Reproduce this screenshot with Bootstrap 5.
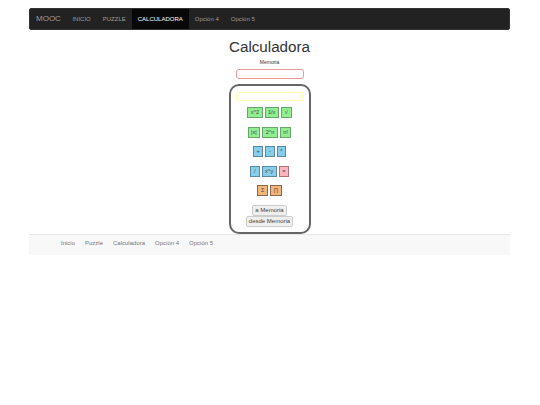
<!DOCTYPE html>
<html lang="es">
<head>
<meta charset="utf-8">
<title>MOOC</title>
<link href="https://cdn.jsdelivr.net/npm/bootstrap@5.3.0/dist/css/bootstrap.min.css" rel="stylesheet">
<style>
body { font-family: "Liberation Sans", Arial, sans-serif; color: #333; background: #fff; }
.page-wrap { width: 481px; margin: 8px 0 0 29px; }
.top-bar { height: 22px; background: #222; border: 1px solid #333; border-radius: 2px; padding: 0; font-size: 6px; }
.top-brand { color: #9d9d9d; font-size: 8px; padding: 0 5.5px 0 6px; line-height: 20px; }
.top-link { color: #9d9d9d; padding: 0 6px; line-height: 20px; text-decoration: none; }
.top-link.is-active { color: #fff; background: #080808; }
.calc-title { font-size: 15.2px; font-weight: 400; line-height: 18px; margin: 8px 0 0; text-align: center; color: #333; }
.mem-label { font-size: 5px; line-height: 6px; margin: 3px 0 4px; text-align: center; }
.mem-input { display: block; width: 68px; height: 10px; margin: 0 auto; border: 1px solid #e99; border-radius: 3px; background: #fff; padding: 0; }
.calc-box { width: 82px; height: 150px; margin: 5px auto 0; border: 2px solid #666; border-radius: 10px; padding-top: 6px; }
.disp-input { display: block; width: 67px; height: 9px; margin: 0 auto 6px; border: 1px solid #ffffa8; border-radius: 2px; background: #fff; padding: 0; }
.key-row { height: 12px; margin-bottom: 7.5px; gap: 2px; }
.calc-key { font-size: 5.5px; line-height: 9px; height: 11px; padding: 0 2.5px; border: 1px solid #666; border-radius: 0; color: #444; }
.key-green { background: #90ee90; border-color: #6aa56a; min-width: 11px; }
.key-blue { background: #87ceeb; border-color: #5a8aa2; min-width: 9.5px; }
.key-red { background: #ffb6c1; border-color: #a87278; }
.key-orange { background: #f4b67a; border-color: #86694a; min-width: 11px; }
.mem-btn { display: block; margin: 0 auto; font-size: 6px; line-height: 8px; height: 11px; padding: 0 2px; background: #efefef; border: 1px solid #ccc; border-radius: 2px; color: #444; }
.bottom-bar { height: 21px; background: #f8f8f8; border-top: 1px solid #e7e7e7; font-size: 6px; padding-left: 27px; }
.bottom-link { color: #777; padding: 0 5px; line-height: 17px; text-decoration: none; }
</style>
</head>
<body>
<div class="page-wrap">
  <nav class="top-bar d-flex align-items-stretch">
    <span class="top-brand">MOOC</span>
    <a class="top-link" href="#">INICIO</a>
    <a class="top-link" href="#">PUZZLE</a>
    <a class="top-link is-active" href="#">CALCULADORA</a>
    <a class="top-link" href="#">Opción 4</a>
    <a class="top-link" href="#">Opción 5</a>
  </nav>
  <h1 class="calc-title">Calculadora</h1>
  <p class="mem-label">Memoria</p>
  <input class="mem-input" type="text" aria-label="Memoria">
  <div class="calc-box">
    <input class="disp-input" type="text" aria-label="Pantalla">
    <div class="key-row d-flex justify-content-center">
      <button class="calc-key key-green">x^2</button><button class="calc-key key-green">1/x</button><button class="calc-key key-green">√</button>
    </div>
    <div class="key-row d-flex justify-content-center">
      <button class="calc-key key-green">|x|</button><button class="calc-key key-green">2^n</button><button class="calc-key key-green">n!</button>
    </div>
    <div class="key-row d-flex justify-content-center">
      <button class="calc-key key-blue">+</button><button class="calc-key key-blue">-</button><button class="calc-key key-blue">*</button>
    </div>
    <div class="key-row d-flex justify-content-center">
      <button class="calc-key key-blue">/</button><button class="calc-key key-blue">x^y</button><button class="calc-key key-red">=</button>
    </div>
    <div class="key-row d-flex justify-content-center">
      <button class="calc-key key-orange">Σ</button><button class="calc-key key-orange">∏</button>
    </div>
    <button class="mem-btn">a Memoria</button>
    <button class="mem-btn">desde Memoria</button>
  </div>
  <footer class="bottom-bar d-flex align-items-start">
    <a class="bottom-link" href="#">Inicio</a>
    <a class="bottom-link" href="#">Puzzle</a>
    <a class="bottom-link" href="#">Calculadora</a>
    <a class="bottom-link" href="#">Opción 4</a>
    <a class="bottom-link" href="#">Opción 5</a>
  </footer>
</div>
<script src="https://cdn.jsdelivr.net/npm/bootstrap@5.3.0/dist/js/bootstrap.bundle.min.js"></script>
</body>
</html>
